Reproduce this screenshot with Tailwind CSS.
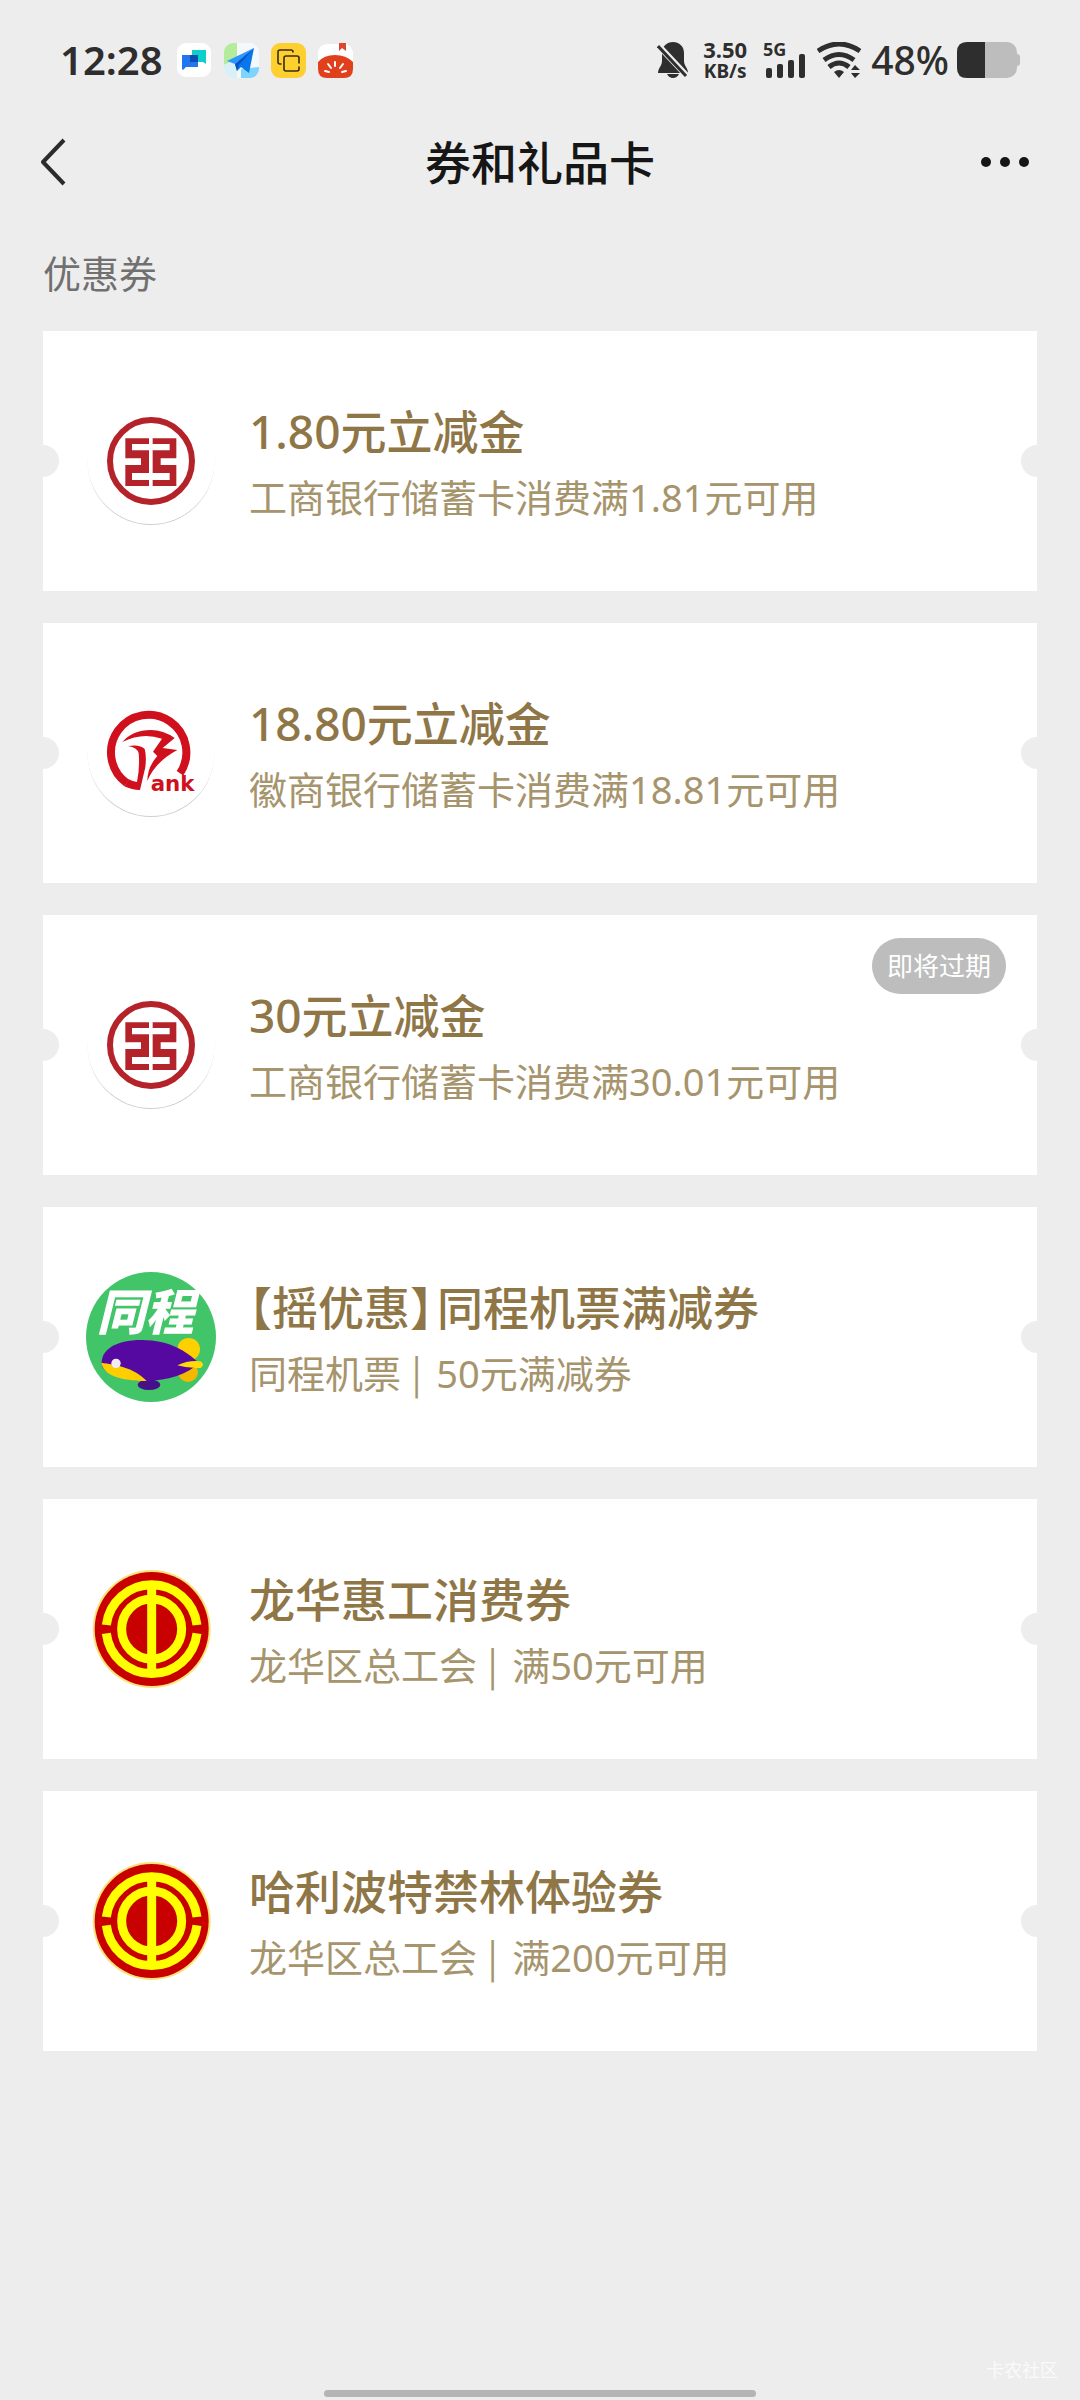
<!DOCTYPE html>
<html lang="zh-CN">

<head>
  <meta charset="utf-8">
  <meta name="viewport" content="width=device-width, initial-scale=1">
  <script src="https://cdn.jsdelivr.net/npm/@tailwindcss/browser@4"></script>
  <title>券和礼品卡</title>
</head>

<body class="flex min-h-screen flex-col bg-[#ededed] font-['Noto_Sans','Noto_Sans_CJK_SC',sans-serif]">

  <!-- shared logos -->
  <svg class="hidden">
    <symbol id="icbc" viewBox="168 228 390 390">
      <circle cx="363" cy="425" r="190" fill="#cfcfcf" />
      <circle cx="363" cy="421" r="191" fill="#fff" />
      <circle cx="363" cy="423" r="123" fill="none" stroke="#b4222a" stroke-width="18" />
      <g fill="#b4222a">
        <path d="M286 355H357V372H306V391H357V459H306V480H357V498H286V435H333V415H286Z" />
        <path d="M439 355H368V372H419V391H368V459H419V480H368V498H439V435H392V415H439Z" />
      </g>
    </symbol>
    <symbol id="union" viewBox="48 72 390 390">
      <circle cx="245" cy="267" r="177" fill="#fbe27a" />
      <circle cx="245" cy="267" r="171" fill="#c80000" />
      <g fill="none" stroke="#ff0" stroke-width="27">
        <circle cx="245" cy="267" r="90" />
        <path d="M109 255A137 137 0 0 1 381 255M109 280A137 137 0 0 0 381 280" />
        <path d="M245 130V404" />
      </g>
    </symbol>
  </svg>

  <!-- status bar -->
  <div class="flex h-[120px] items-center pl-[60px] pr-[59px] text-[#2e2e2e]">
    <span class="text-[40px] font-semibold">12:28</span>
    <div class="ml-[14px] flex gap-3">
      <svg class="size-[35px]" viewBox="0 0 35 35">
        <rect width="34" height="34" rx="9" fill="#fff" />
        <path d="M15 7H29V21L26 19H15Z" fill="#0fd0c8" />
        <path d="M5 12H21V24H9L6 27Q5 27 5 25Z" fill="#2176f0" />
        <path d="M13 12H21V19H13Z" fill="#0b4db3" />
      </svg>
      <svg class="size-[35px]" viewBox="0 0 35 35">
        <clipPath id="tile"><rect width="35" height="35" rx="9" /></clipPath>
        <g clip-path="url(#tile)">
          <rect width="35" height="35" fill="#f4f8fa" />
          <path d="M0 0H13V16L0 22Z" fill="#b4ec9c" />
          <path d="M0 22L13 16V35H0Z" fill="#d9f0f6" />
          <path d="M17 35V26L35 24V35Z" fill="#7fd4fb" />
        </g>
        <path d="M30 5L3 18L11 21Z" fill="#2b96ff" />
        <path d="M30 5L11 21L13 28L17 24L25 30Z" fill="#0a76ec" />
        <path d="M30 5L11 21L13 28L15 22Z" fill="#0556c4" />
      </svg>
      <svg class="size-[35px]" viewBox="0 0 35 35">
        <rect width="35" height="35" rx="9" fill="#fdd02f" />
        <g fill="none" stroke="#3a2b10" stroke-width="1.6" stroke-linecap="round">
          <path d="M22 9Q22 7 20 7H9Q7 7 7 9V19Q7 21 9 21H10" />
          <path d="M28 20V15Q28 13 26 13H15Q13 13 13 15V26Q13 28 15 28H26Q28 28 28 26V24" />
        </g>
      </svg>
      <svg class="size-[35px]" viewBox="0 0 35 35">
        <rect y="1" width="35" height="34" rx="9" fill="#fff" />
        <path d="M0 19Q6 12 17 12T35 19V26Q35 35 26 35H9Q0 35 0 26Z" fill="#e0401c" />
        <path d="M21 0H28V8L24 5L21 8Z" fill="#d8492f" />
        <path d="M7 28L11 29M10 21L13 25M17 19V23M25 21L22 25M28 28L24 29" stroke="#fff" stroke-width="2" stroke-linecap="round" />
      </svg>
    </div>

    <div class="ml-auto flex items-center">
      <svg class="h-9 w-8" viewBox="0 0 32 36">
        <path d="M16 0C22 0 27 4 27 11V19C27 24 31 26 31 31H1C1 26 5 24 5 19V11C5 4 10 0 16 0ZM10 32H22Q20 36 16 36T10 32Z" fill="#2e2e2e" />
        <path d="M0 2L31 35" stroke="#ededed" stroke-width="6" />
        <path d="M1 4L29 34" stroke="#2e2e2e" stroke-width="3" />
      </svg>
      <div class="ml-[14px] flex flex-col items-center font-bold">
        <span class="text-[22px] leading-[22px]">3.50</span>
        <span class="text-[19px] leading-[22px]">KB/s</span>
      </div>
      <svg class="ml-4 h-9 w-11 overflow-visible" viewBox="0 0 44 36" fill="#2e2e2e">
        <text x="0" y="14" font-size="18" class="font-bold">5G</text>
        <rect x="3" y="26" width="6" height="10" rx="2" />
        <rect x="14" y="22" width="6" height="14" rx="2" />
        <rect x="25" y="18" width="6" height="18" rx="2" />
        <rect x="36" y="12" width="6" height="24" rx="2" />
      </svg>
      <svg class="ml-[10px] h-9 w-11" viewBox="0 0 44 36">
        <g fill="none" stroke="#2e2e2e" stroke-width="5">
          <path d="M1 9Q22 -5 43 9M7 18Q22 7 37 18M12 25Q22 17 32 25" />
        </g>
        <path d="M17 30Q22 26 27 30L22 36ZM34 28L38 23L43 28ZM34 31H43L38 36Z" fill="#2e2e2e" />
      </svg>
      <span class="ml-[10px] text-[39px] font-medium">48%</span>
      <svg class="ml-2 h-9 w-16" viewBox="0 0 64 36">
        <rect width="60" height="36" rx="10" fill="#bdbdbd" />
        <path d="M60 12Q63 12 63 15V21Q63 24 60 24Z" fill="#bdbdbd" />
        <path d="M28 0H10Q0 0 0 10V26Q0 36 10 36H28Z" fill="#2e2e2e" />
      </svg>
    </div>
  </div>

  <header class="flex h-[84px] items-center justify-between px-[41px]">
    <button type="button" aria-label="返回" class="w-16">
      <svg class="h-12 w-[26px]" viewBox="0 0 26 48">
        <path d="M23 2L2 24L23 46" fill="none" stroke="#2b2b2b" stroke-width="4" stroke-linejoin="round" />
      </svg>
    </button>
    <h1 class="text-[46px] leading-[64px] font-medium text-[#161616]">券和礼品卡</h1>
    <button type="button" aria-label="更多" class="flex w-16 justify-end gap-[9px] pr-[10px]">
      <span class="size-[10px] shrink-0 rounded-full bg-[#161616]"></span>
      <span class="size-[10px] shrink-0 rounded-full bg-[#161616]"></span>
      <span class="size-[10px] shrink-0 rounded-full bg-[#161616]"></span>
    </button>
  </header>

  <main class="px-[43px] pt-[41px]">
    <h2 class="text-[38px] leading-[56px] text-[#707070]">优惠券</h2>

    <ul class="mt-[30px] flex flex-col gap-8">
      <li class="relative overflow-hidden bg-white">
        <span class="absolute top-1/2 -left-4 size-8 -translate-y-1/2 rounded-full bg-[#ededed]"></span>
        <span class="absolute top-1/2 -right-4 size-8 -translate-y-1/2 rounded-full bg-[#ededed]"></span>
        <a href="#" class="flex min-h-[260px] items-center gap-[33px] px-[43px]">
          <svg class="size-[130px] shrink-0"><use href="#icbc" /></svg>
          <div class="pt-2">
            <h3 class="text-[46px] leading-[64px] font-medium text-[#8f7647]">1.80元立减金</h3>
            <p class="text-[38px] leading-[68px] text-[#a6946c]">工商银行储蓄卡消费满1.81元可用</p>
          </div>
        </a>
      </li>

      <li class="relative overflow-hidden bg-white">
        <span class="absolute top-1/2 -left-4 size-8 -translate-y-1/2 rounded-full bg-[#ededed]"></span>
        <span class="absolute top-1/2 -right-4 size-8 -translate-y-1/2 rounded-full bg-[#ededed]"></span>
        <a href="#" class="flex min-h-[260px] items-center gap-[33px] px-[43px]">
          <svg class="size-[130px] shrink-0" viewBox="78 24 390 390">
            <circle cx="273" cy="221" r="190" fill="#cfcfcf" />
            <circle cx="273" cy="217" r="191" fill="#fff" />
            <path d="M360 280A113 113 0 1 0 200 309" fill="none" stroke="#d0101c" stroke-width="24" />
            <path d="M193 319Q215 330 240 330L256 262Q260 226 254 207Q240 192 204 198Q232 202 236 220Q240 262 231 306Q218 305 206 298Z" fill="#d0101c" />
            <path d="M187 186Q218 150 272 150Q310 150 344 174L308 204L352 210Q285 246 262 303Q262 262 292 228L279 215L306 176Q246 156 187 186Z" fill="#d0101c" />
            <text x="272" y="333" font-size="64" fill="#d0101c" class="font-['DejaVu_Sans',sans-serif] font-bold">ank</text>
          </svg>
          <div class="pt-2">
            <h3 class="text-[46px] leading-[64px] font-medium text-[#8f7647]">18.80元立减金</h3>
            <p class="text-[38px] leading-[68px] text-[#a6946c]">徽商银行储蓄卡消费满18.81元可用</p>
          </div>
        </a>
      </li>

      <li class="relative overflow-hidden bg-white">
        <span class="absolute top-1/2 -left-4 size-8 -translate-y-1/2 rounded-full bg-[#ededed]"></span>
        <span class="absolute top-1/2 -right-4 size-8 -translate-y-1/2 rounded-full bg-[#ededed]"></span>
        <span class="absolute top-[23px] right-[31px] rounded-full bg-[#bdbdbd] px-[15px] text-[26px] leading-[56px] text-white">即将过期</span>
        <a href="#" class="flex min-h-[260px] items-center gap-[33px] px-[43px]">
          <svg class="size-[130px] shrink-0"><use href="#icbc" /></svg>
          <div class="pt-2">
            <h3 class="text-[46px] leading-[64px] font-medium text-[#8f7647]">30元立减金</h3>
            <p class="text-[38px] leading-[68px] text-[#a6946c]">工商银行储蓄卡消费满30.01元可用</p>
          </div>
        </a>
      </li>

      <li class="relative overflow-hidden bg-white">
        <span class="absolute top-1/2 -left-4 size-8 -translate-y-1/2 rounded-full bg-[#ededed]"></span>
        <span class="absolute top-1/2 -right-4 size-8 -translate-y-1/2 rounded-full bg-[#ededed]"></span>
        <a href="#" class="flex min-h-[260px] items-center gap-[33px] px-[43px]">
          <svg class="size-[130px] shrink-0" viewBox="48 66 390 390">
            <circle cx="243" cy="261" r="195" fill="#42c468" />
            <text x="80" y="240" font-size="146" fill="#fff" class="font-['Noto_Sans_CJK_SC',sans-serif] font-black italic">同程</text>
            <circle cx="356" cy="298" r="34" fill="#fdd000" />
            <circle cx="354" cy="366" r="30" fill="#f5b800" />
            <ellipse cx="237" cy="404" rx="34" ry="16" fill="#45108a" />
            <path d="M95 342C93 300 135 270 215 270C300 270 350 305 388 340C350 372 300 392 225 393C160 390 97 372 95 342Z" fill="#5609a0" />
            <path d="M94 338C135 345 190 350 230 393C150 392 100 375 94 338Z" fill="#fdcf00" />
            <path d="M322 346Q355 330 392 334Q406 344 392 354Q355 356 322 346Z" fill="#ffd90a" />
            <circle cx="138" cy="340" r="14" fill="#f2ecf8" />
          </svg>
          <div class="pt-2">
            <h3 class="text-[46px] leading-[64px] font-medium text-[#8f7647]"><span class="mr-1 [font-feature-settings:'halt']">【摇优惠】</span>同程机票满减券</h3>
            <p class="text-[38px] leading-[68px] text-[#a6946c]">同程机票<span class="pr-1.5 pl-0.5 font-['Noto_Sans_CJK_SC',sans-serif] leading-none"> | </span>50元满减券</p>
          </div>
        </a>
      </li>

      <li class="relative overflow-hidden bg-white">
        <span class="absolute top-1/2 -left-4 size-8 -translate-y-1/2 rounded-full bg-[#ededed]"></span>
        <span class="absolute top-1/2 -right-4 size-8 -translate-y-1/2 rounded-full bg-[#ededed]"></span>
        <a href="#" class="flex min-h-[260px] items-center gap-[33px] px-[43px]">
          <svg class="size-[130px] shrink-0"><use href="#union" /></svg>
          <div class="pt-2">
            <h3 class="text-[46px] leading-[64px] font-medium text-[#8f7647]">龙华惠工消费券</h3>
            <p class="text-[38px] leading-[68px] text-[#a6946c]">龙华区总工会<span class="pr-1.5 pl-0.5 font-['Noto_Sans_CJK_SC',sans-serif] leading-none"> | </span>满50元可用</p>
          </div>
        </a>
      </li>

      <li class="relative overflow-hidden bg-white">
        <span class="absolute top-1/2 -left-4 size-8 -translate-y-1/2 rounded-full bg-[#ededed]"></span>
        <span class="absolute top-1/2 -right-4 size-8 -translate-y-1/2 rounded-full bg-[#ededed]"></span>
        <a href="#" class="flex min-h-[260px] items-center gap-[33px] px-[43px]">
          <svg class="size-[130px] shrink-0"><use href="#union" /></svg>
          <div class="pt-2">
            <h3 class="text-[46px] leading-[64px] font-medium text-[#8f7647]">哈利波特禁林体验券</h3>
            <p class="text-[38px] leading-[68px] text-[#a6946c]">龙华区总工会<span class="pr-1.5 pl-0.5 font-['Noto_Sans_CJK_SC',sans-serif] leading-none"> | </span>满200元可用</p>
          </div>
        </a>
      </li>
    </ul>
  </main>

  <footer class="mt-auto flex flex-col pb-[3px]">
    <span class="mb-2 self-end pr-[22px] text-[18px] leading-6 text-[#fafafa]">卡农社区</span>
    <div class="h-[7px] w-2/5 self-center rounded-full bg-[#b4b4b4]"></div>
  </footer>

</body>

</html>
